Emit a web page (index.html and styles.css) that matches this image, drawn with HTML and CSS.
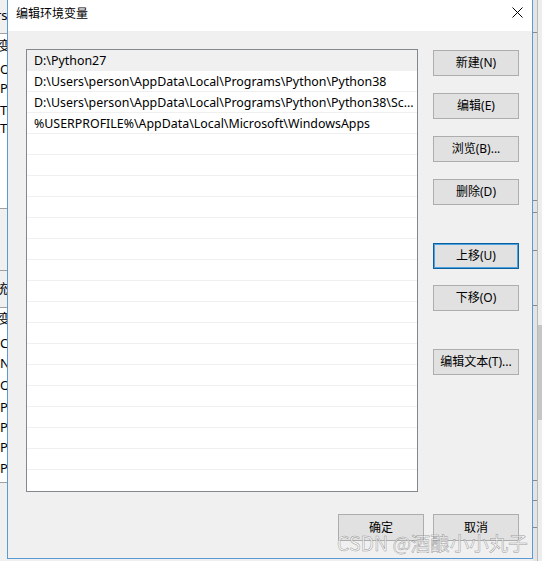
FILE: index.html
```html
<!DOCTYPE html>
<html lang="zh-CN">
<head>
<meta charset="utf-8">
<title>编辑环境变量</title>
<link rel="stylesheet" href="styles.css">
</head>
<body>
<div class="desk">
  <div class="bg-left">
    <div class="bl-list bl-list-1"></div>
    <div class="bl-list bl-list-2"></div>
    <div class="bl-line" style="top:33px"></div>
    <div class="bl-line" style="top:208px"></div>
    <div class="bl-line" style="top:270px"></div>
    <div class="bl-line" style="top:307px"></div>
    <div class="bl-line" style="top:482px"></div>
    <span class="bl-t" style="top:7px;left:-4px">rs</span>
    <span class="bl-t" style="top:37px;left:-2px">变量</span>
    <span class="bl-t" style="top:61px">OneDrive</span>
    <span class="bl-t" style="top:80px">Path</span>
    <span class="bl-t" style="top:102px">TEMP</span>
    <span class="bl-t" style="top:120px">TMP</span>
    <span class="bl-t" style="top:280px;left:-5px">统变量</span>
    <span class="bl-t" style="top:310px;left:-2px">变量</span>
    <span class="bl-t" style="top:335px">ComSpec</span>
    <span class="bl-t" style="top:355px">NUMBER</span>
    <span class="bl-t" style="top:377px">OS</span>
    <span class="bl-t" style="top:399px">Path</span>
    <span class="bl-t" style="top:419px">PATHEXT</span>
    <span class="bl-t" style="top:439px">PROCESSOR</span>
    <span class="bl-t" style="top:460px">PROCESSOR</span>
  </div>
  <div class="bg-right">
    <div class="br-line" style="top:32px"></div>
    <div class="br-line" style="top:200px"></div>
    <div class="br-line" style="top:212px"></div>
    <div class="br-line" style="top:250px"></div>
    <div class="br-line" style="top:305px"></div>
    <div class="br-thumb"></div>
    <div class="br-line" style="top:480px"></div>
    <div class="br-line" style="top:500px"></div>
    <div class="br-line" style="top:527px"></div>
  </div>

  <div class="dialog">
    <div class="titlebar">
      <span class="title">编辑环境变量</span>
      <svg class="close" width="11" height="11" viewBox="0 0 11 11"><path d="M0.5 0.5 L10.5 10.5 M10.5 0.5 L0.5 10.5" stroke="#000" stroke-width="1" fill="none"/></svg>
    </div>
    <div class="body">
      <div class="main">
        <div class="list">
          <div class="row sel">D:\Python27</div>
          <div class="row">D:\Users\person\AppData\Local\Programs\Python\Python38</div>
          <div class="row">D:\Users\person\AppData\Local\Programs\Python\Python38\Sc...</div>
          <div class="row">%USERPROFILE%\AppData\Local\Microsoft\WindowsApps</div>
          <div class="row"></div><div class="row"></div><div class="row"></div><div class="row"></div>
          <div class="row"></div><div class="row"></div><div class="row"></div><div class="row"></div>
          <div class="row"></div><div class="row"></div><div class="row"></div><div class="row"></div>
          <div class="row"></div><div class="row"></div><div class="row"></div><div class="row"></div>
          <div class="row last"></div>
        </div>
        <div class="side">
          <button class="btn b-new">新建(N)</button>
          <button class="btn b-gap">编辑(E)</button>
          <button class="btn b-gap">浏览(B)...</button>
          <button class="btn b-gap">删除(D)</button>
          <button class="btn b-biggap focus">上移(U)</button>
          <button class="btn b-gap2">下移(O)</button>
          <button class="btn b-biggap">编辑文本(T)...</button>
        </div>
      </div>
      <div class="footer">
        <button class="btn">确定</button>
        <button class="btn">取消</button>
      </div>
    </div>
  </div>
  <div class="watermark">CSDN @酒酿小小丸子</div>
</div>
</body>
</html>
```

FILE: styles.css
```css
* { box-sizing: border-box; }
html, body {
  margin: 0;
  padding: 0;
  width: 542px;
  height: 561px;
  overflow: hidden;
  background: #f0f0f0;
  font-family: "Noto Sans", "Noto Sans CJK SC", sans-serif;
  font-size: 12px;
  color: #000;
}
.desk {
  position: relative;
  width: 542px;
  height: 561px;
  overflow: hidden;
}

/* background windows */
.bg-left {
  position: absolute;
  left: 0;
  top: 0;
  width: 80px;
  height: 561px;
  background: #f0f0f0;
}
.bl-list {
  position: absolute;
  left: 0;
  width: 80px;
  background: #fff;
}
.bl-list-1 { top: 34px; height: 174px; }
.bl-list-2 { top: 308px; height: 174px; }
.bl-line {
  position: absolute;
  left: 0;
  width: 80px;
  height: 1px;
  background: #a0a0a0;
}
.bl-t {
  position: absolute;
  left: 0;
  line-height: 16px;
  white-space: nowrap;
  font-size: 13px;
}
.bg-right {
  position: absolute;
  left: 533px;
  top: 0;
  width: 9px;
  height: 561px;
  background: #ededed;
  border-left: 4px solid #e4e4e4;
}
.bg-right::after {
  content: "";
  position: absolute;
  left: 0;
  top: 0;
  width: 1px;
  height: 561px;
  background: #b8b8b8;
}
.br-line {
  position: absolute;
  left: -4px;
  width: 5px;
  height: 1px;
  background: #8a8a8a;
}
.br-thumb {
  position: absolute;
  left: 1px;
  top: 325px;
  width: 4px;
  height: 95px;
  background: #c6c6c6;
}

/* dialog */
.dialog {
  position: absolute;
  left: 7px;
  top: -1px;
  width: 526px;
  height: 560px;
  border: 1px solid #5b9bd5;
  background: #f0f0f0;
  display: flex;
  flex-direction: column;
}
.titlebar {
  height: 31px;
  background: #fff;
  display: flex;
  align-items: flex-start;
  justify-content: space-between;
  padding: 6px 9px 0 8px;
}
.title {
  line-height: 16px;
  font-size: 12px;
}
.close {
  margin-top: 1px;
  display: block;
}
.body {
  flex: 1;
  padding: 18px 13px 0 18px;
  display: flex;
  flex-direction: column;
}
.main {
  display: flex;
  gap: 15px;
}
.list {
  width: 392px;
  height: 443px;
  border: 1px solid #828790;
  background: #fff;
  overflow: hidden;
}
.row {
  height: 21px;
  border-bottom: 1px solid #f0f0f0;
  padding: 2px 0 0 7px;
  line-height: 18px;
  white-space: nowrap;
  overflow: hidden;
  font-size: 12.4px;
}
.row.sel { background: #f0f0f0; }
.row.last { border-bottom: none; }

.side {
  display: flex;
  flex-direction: column;
  width: 86px;
}
.btn {
  width: 86px;
  height: 26px;
  padding: 0;
  border: 1px solid #adadad;
  background: #e1e1e1;
  font-family: "Noto Sans", "Noto Sans CJK SC", sans-serif;
  font-size: 12px;
  color: #000;
  line-height: 22px;
}
.b-new { margin-top: 1px; }
.b-gap { margin-top: 17px; }
.b-gap2 { margin-top: 16px; }
.b-biggap { margin-top: 38px; }
.btn.focus {
  border: 1px solid #0a5f9e;
  box-shadow: inset 0 0 0 1px #4aa3df;
}
.footer {
  display: flex;
  justify-content: flex-end;
  gap: 9px;
  margin-top: 22px;
}
.footer .btn { height: 27px; }

.watermark {
  position: absolute;
  left: 337px;
  top: 530px;
  font-family: "Noto Sans CJK SC", "Noto Sans", sans-serif;
  font-size: 19.5px;
  line-height: 26px;
  white-space: nowrap;
  color: rgba(255, 255, 255, 0.7);
  -webkit-text-stroke: 0.5px rgba(120, 120, 120, 0.75);
  pointer-events: none;
}
```
